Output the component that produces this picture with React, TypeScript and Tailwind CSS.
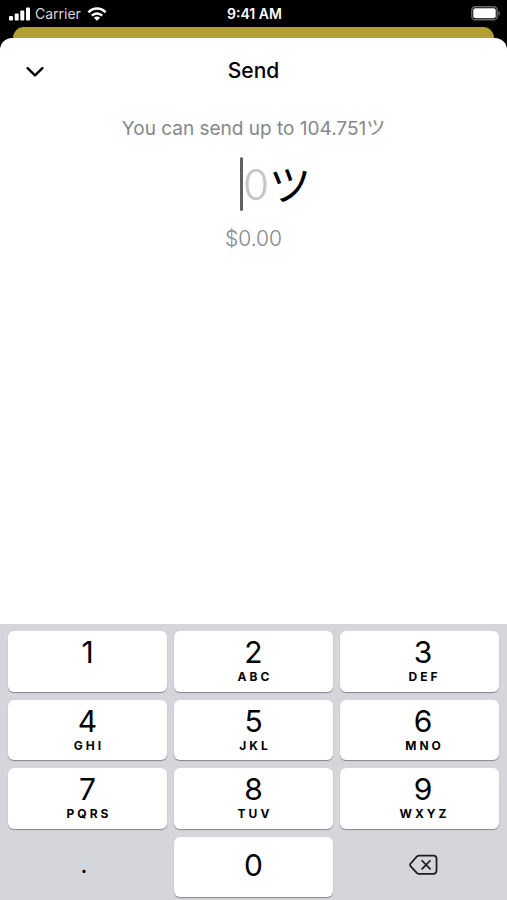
import React, { useState } from 'react';
import { clsx } from 'clsx';

const KEYS = [
  { value: '1', letters: '' },
  { value: '2', letters: 'ABC' },
  { value: '3', letters: 'DEF' },
  { value: '4', letters: 'GHI' },
  { value: '5', letters: 'JKL' },
  { value: '6', letters: 'MNO' },
  { value: '7', letters: 'PQRS' },
  { value: '8', letters: 'TUV' },
  { value: '9', letters: 'WXYZ' },
];

const KEY_CLASS = 'flex flex-col items-center rounded-md bg-white shadow-[0_1px_1px_#85878b]';

function StatusBar() {
  return (
    <div className="grid h-[27px] grid-cols-3 items-center pr-1.5 pl-2 text-sm text-white">
      <div className="flex items-center gap-1">
        <svg width="23" height="14" viewBox="0 0 23 14" fill="currentColor">
          <rect x="1" y="9" width="4" height="4.5" rx="1" />
          <rect x="6.7" y="6.5" width="4" height="7" rx="1" />
          <rect x="12.3" y="3.5" width="4" height="10" rx="1" />
          <rect x="18" y="0.5" width="4" height="13" rx="1" />
        </svg>
        <span className="text-[#d8d8d8]">Carrier</span>
        <svg width="22" height="14" viewBox="-2 0 22 14" fill="none" stroke="currentColor" strokeWidth="2.5">
          <path d="M1.4 5.3C6.4.3 13.6.3 18.6 5.3" />
          <path d="M4.8 8.6c3-2.9 7.4-2.9 10.4 0" />
          <path d="M10 13.7 6.9 10.7c1.8-1.6 4.4-1.6 6.2 0z" fill="currentColor" stroke="none" />
        </svg>
      </div>
      <div className="text-center font-semibold">9:41 AM</div>
      <svg className="justify-self-end" width="30" height="15" viewBox="0 0 30 15">
        <rect x="0.8" y="0.8" width="25.4" height="13" rx="3.6" fill="none" stroke="#68686a" strokeWidth="1.5" />
        <rect x="2.3" y="2.3" width="22.4" height="10" rx="2" fill="#fff" />
        <path d="M27.5 5v4.8c2-.8 2-4 0-4.8z" fill="#68686a" />
      </svg>
    </div>
  );
}

export default function App() {
  const [amount, setAmount] = useState('');

  const press = (key: string) => {
    if (key === '.' && amount.includes('.')) return;
    setAmount(amount + key);
  };

  return (
    <div className="flex min-h-screen flex-col bg-black font-['Inter','Noto_Sans_CJK_JP',sans-serif] text-black">
      <StatusBar />

      {/* Edge of the card behind the sheet */}
      <div className="mx-[13px] h-[11px] rounded-t-xl bg-[#b2a033]" />

      {/* Send sheet */}
      <main className="flex flex-1 flex-col rounded-t-xl bg-white">
        <header className="grid h-[66px] grid-cols-[1fr_auto_1fr] items-center px-6">
          <button type="button" aria-label="Close" className="justify-self-start">
            <svg width="22" height="22" viewBox="0 0 22 22" fill="none" stroke="currentColor" strokeWidth="2.4" strokeLinecap="round" strokeLinejoin="round">
              <path d="M3.6 8.2 11 15.4l7.4-7.2" />
            </svg>
          </button>
          <h1 className="text-[21px] font-medium">Send</h1>
        </header>

        <div className="flex flex-1 flex-col items-center pt-[11px] text-[#85888a]">
          <p className="text-[19px] leading-7">You can send up to 104.751ツ</p>
          <label className="mt-3.5 flex h-[54px] items-center pl-11 text-[42px] leading-none text-black">
            {!amount && <span className="h-full w-[3px] rounded-full bg-[#606060]" />}
            <input
              aria-label="Amount"
              inputMode="none"
              placeholder="0"
              value={amount}
              onChange={(e) => setAmount(e.target.value)}
              className="field-sizing-content h-full bg-transparent font-light outline-none placeholder:text-[#c4c4c4]"
            />
            <span className="pt-1 font-normal">ツ</span>
          </label>
          <p className="mt-3 text-[21px] leading-8 font-light">${(Number(amount) * 0.05).toFixed(2)}</p>
        </div>

        {/* Number pad */}
        <div className="grid h-[276px] grid-cols-3 grid-rows-4 gap-x-[7px] gap-y-2 bg-[#d5d6dc] px-2 pt-[7px] pb-[3px]">
          {KEYS.map((key, i) => (
            <button
              key={key.value}
              type="button"
              onClick={() => press(key.value)}
              className={clsx(KEY_CLASS, 'pt-[3px]', i % 3 === 2 && 'pl-[7px]')}
            >
              <span className="text-[30px] leading-9">{key.value}</span>
              <span className="pl-[3px] text-xs leading-[14px] font-bold tracking-[3px]">{key.letters}</span>
            </button>
          ))}
          <button type="button" onClick={() => press('.')} className="pr-[7px] pb-1 text-2xl">.</button>
          <button type="button" onClick={() => press('0')} className={clsx(KEY_CLASS, 'justify-center pb-1')}>
            <span className="text-[30px] leading-9">0</span>
          </button>
          <button
            type="button"
            aria-label="Delete"
            onClick={() => setAmount(amount.slice(0, -1))}
            className="flex items-center justify-center pb-1 pl-[7px]"
          >
            <svg width="29" height="22" viewBox="0 0 30 22" fill="none" stroke="#1c1c1e" strokeWidth="1.8" strokeLinecap="round" strokeLinejoin="round">
              <path d="M10.5 1.2h14.6c2.2 0 3.4 1.2 3.4 3.4v12.2c0 2.2-1.2 3.4-3.4 3.4H10.5c-1 0-1.8-.4-2.5-1.1L1.8 12.4c-.9-.9-.9-2.1 0-3L8 2.3c.7-.7 1.5-1.1 2.5-1.1z" />
              <path d="m13.6 6.6 8.2 8.4M21.8 6.6l-8.2 8.4" />
            </svg>
          </button>
        </div>
      </main>
    </div>
  );
}
